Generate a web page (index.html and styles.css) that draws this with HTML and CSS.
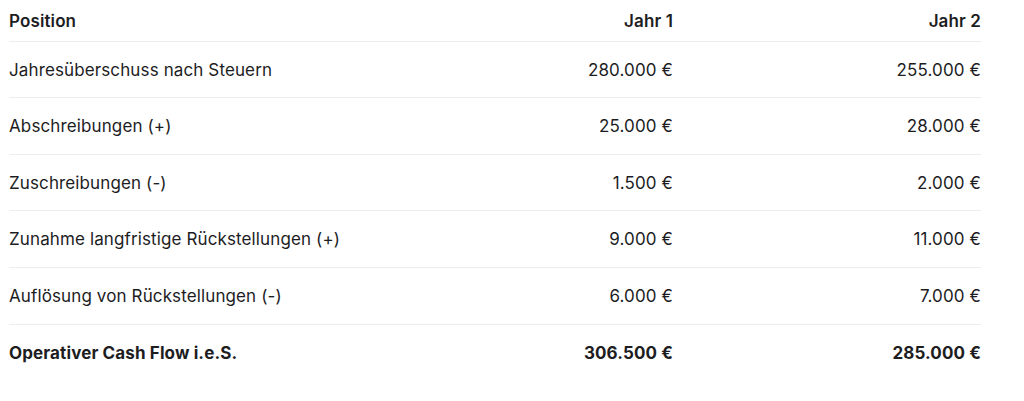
FILE: index.html
```html
<!DOCTYPE html>
<html lang="de">
<head>
<meta charset="utf-8">
<link rel="stylesheet" href="styles.css">
</head>
<body>
<div class="wrap">
<table class="cf">
  <colgroup>
    <col class="c-pos">
    <col class="c-val">
    <col class="c-val">
  </colgroup>
  <thead>
    <tr><th class="l">Position</th><th class="r">Jahr 1</th><th class="r">Jahr 2</th></tr>
  </thead>
  <tbody>
    <tr><td class="l">Jahresüberschuss nach Steuern</td><td class="r">280.000 €</td><td class="r">255.000 €</td></tr>
    <tr><td class="l">Abschreibungen (+)</td><td class="r">25.000 €</td><td class="r">28.000 €</td></tr>
    <tr><td class="l">Zuschreibungen (-)</td><td class="r">1.500 €</td><td class="r">2.000 €</td></tr>
    <tr><td class="l">Zunahme langfristige Rückstellungen (+)</td><td class="r">9.000 €</td><td class="r">11.000 €</td></tr>
    <tr><td class="l">Auflösung von Rückstellungen (-)</td><td class="r">6.000 €</td><td class="r">7.000 €</td></tr>
    <tr class="total"><td class="l">Operativer Cash Flow i.e.S.</td><td class="r">306.500 €</td><td class="r">285.000 €</td></tr>
  </tbody>
</table>
</div>
</body>
</html>
```
FILE: styles.css
```css
html, body { margin: 0; padding: 0; background: #fff; }
body { font-family: Inter, "Liberation Sans", sans-serif; font-size: 17px; letter-spacing: 0.12px; color: #1d1d1f; }
.wrap { padding: 0 0 0 9px; }
.cf { border-collapse: collapse; width: 972px; table-layout: fixed; }
.c-pos { width: 356px; }
.c-val { width: 308px; }
.cf th, .cf td { padding: 17px 0 15px; line-height: 23.6px; border-bottom: 1px solid #ededed; }
.cf th { font-weight: 600; padding: 10px 0 7px; }
.cf .l { text-align: left; }
.cf .r { text-align: right; }
.cf tr.total td { font-weight: 700; border-bottom: none; }
```
